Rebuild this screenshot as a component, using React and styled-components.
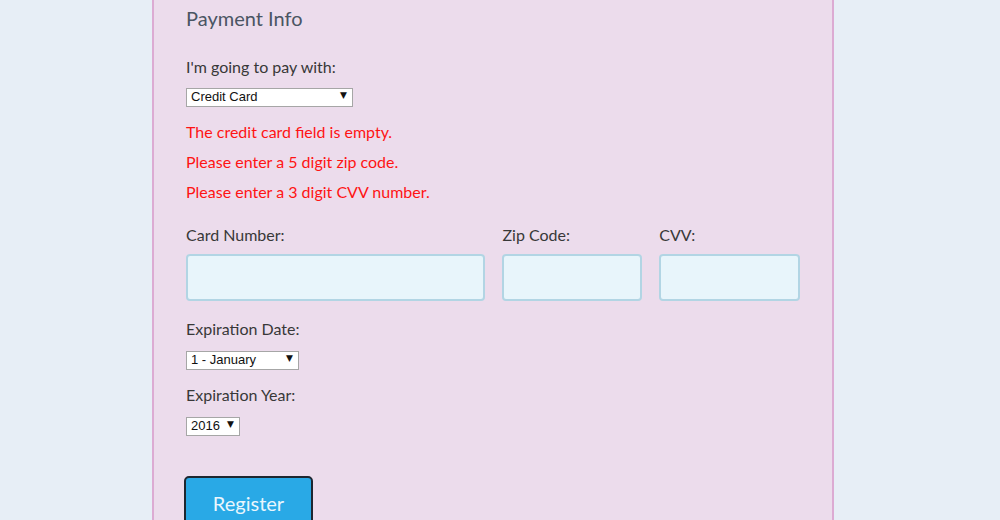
import React from "react";
import styled, { createGlobalStyle } from "styled-components";

const GlobalStyle = createGlobalStyle`
  body {
    margin: 0;
    background: #e7eef6;
    font-family: Lato, "Open Sans", sans-serif;
  }
`;

const Page = styled.div`
  height: 520px;
  padding-left: 152px;
  overflow: hidden;
`;

const Panel = styled.form`
  display: flow-root;
  width: 614px;
  height: 560px;
  padding: 0 32px;
  background: #ecdcec;
  border-left: 2px solid #dcabd3;
  border-right: 2px solid #dcabd3;
`;

const Heading = styled.h2`
  margin: 6px 0 0;
  font-size: 20px;
  line-height: 24px;
  font-weight: 400;
  color: #4a5563;
`;

const Label = styled.label`
  display: block;
  margin-top: ${(p) => p.$top || 0}px;
  font-size: 16px;
  line-height: 20px;
  color: #383838;
`;

const SelectWrap = styled.div`
  position: relative;
  width: ${(p) => p.$width}px;
  height: 19px;
  margin-top: ${(p) => p.$top || 0}px;
`;

const Select = styled.select`
  appearance: none;
  box-sizing: border-box;
  width: 100%;
  height: 19px;
  margin: 0;
  padding: 0 0 1px 4px;
  border: 1px solid #a6a6a6;
  border-radius: 0;
  background: #fff;
  font-family: "Liberation Sans", Arial, sans-serif;
  font-size: 13px;
  line-height: 15px;
  color: #111;
`;

const Arrow = styled.span`
  position: absolute;
  right: 6px;
  top: 5px;
  font-family: "DejaVu Sans", sans-serif;
  font-size: 9px;
  line-height: 10px;
  color: #111;
  pointer-events: none;
`;

const Errors = styled.div`
  margin-top: 18px;
  display: flex;
  flex-direction: column;
  gap: 10px;
`;

const Error = styled.p`
  margin: 0;
  font-size: 16px;
  line-height: 20px;
  color: #ff1414;
`;

const CardRow = styled.div`
  display: flex;
  gap: 17px;
  margin-top: 23px;
`;

const Field = styled.div`
  width: ${(p) => p.$width}px;
  display: flex;
  flex-direction: column;
  gap: 9px;
`;

const Input = styled.input`
  box-sizing: border-box;
  width: 100%;
  height: 47px;
  margin: 0;
  border: 2px solid #b2d5e4;
  border-radius: 4px;
  background: #e8f5fb;
`;

const Button = styled.button`
  display: block;
  box-sizing: border-box;
  width: 129px;
  height: 54px;
  margin: 43px 0 0 -2px;
  border: 2px solid #1e2730;
  border-radius: 5px;
  background: #29a9e6;
  color: #eaf6fd;
  font-family: Lato, "Open Sans", sans-serif;
  font-size: 20px;
`;

function Dropdown({ width, top, value }) {
  return (
    <SelectWrap $width={width} $top={top}>
      <Select defaultValue={value}>
        <option>{value}</option>
      </Select>
      <Arrow>▼</Arrow>
    </SelectWrap>
  );
}

export default function App() {
  return (
    <Page>
      <GlobalStyle />
      <Panel>
        <Heading>Payment Info</Heading>
        <Label $top={27}>I'm going to pay with:</Label>
        <Dropdown width={167} top={8} value="Credit Card" />
        <Errors>
          <Error>The credit card field is empty.</Error>
          <Error>Please enter a 5 digit zip code.</Error>
          <Error>Please enter a 3 digit CVV number.</Error>
        </Errors>
        <CardRow>
          <Field $width={300}>
            <Label>Card Number:</Label>
            <Input />
          </Field>
          <Field $width={140}>
            <Label>Zip Code:</Label>
            <Input />
          </Field>
          <Field $width={141}>
            <Label>CVV:</Label>
            <Input />
          </Field>
        </CardRow>
        <Label $top={18}>Expiration Date:</Label>
        <Dropdown width={113} top={9} value="1 - January" />
        <Label $top={18}>Expiration Year:</Label>
        <Dropdown width={54} top={9} value="2016" />
        <Button type="button">Register</Button>
      </Panel>
    </Page>
  );
}
